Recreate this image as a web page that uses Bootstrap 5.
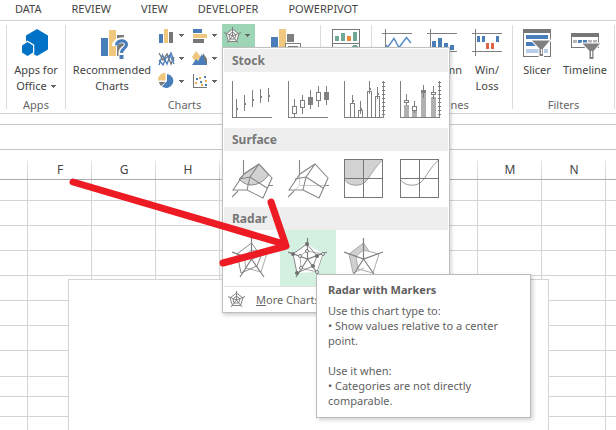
<!DOCTYPE html>
<html lang="en">
<head>
<meta charset="utf-8">
<meta name="viewport" content="width=device-width, initial-scale=1">
<title>Insert chart</title>
<link href="https://cdn.jsdelivr.net/npm/bootstrap@5.3.0/dist/css/bootstrap.min.css" rel="stylesheet">
<style>
  body { font-family: "Noto Sans", "Open Sans", sans-serif; font-size: 11px; line-height: 16px; color: #444; background: #fff; }
  button { font: inherit; color: inherit; background: none; border: 0; padding: 0; }
  svg { display: block; flex: none; }
  .px { shape-rendering: crispEdges; }
  .tabs { height: 21px; gap: 30px; padding-left: 15px; border-bottom: 1px solid #d4d4d4; }
  .tabs a { color: #444; text-decoration: none; line-height: 17px; }
  .ribbon { height: 93px; padding-left: 6px; border-bottom: 1px solid #d4d4d4; }
  .sep { width: 1px; margin: 4px 0; background: #dcdcdc; flex: none; }
  .group { flex: none; }
  .tools { height: 73px; padding-top: 3px; }
  .caption { color: #666; text-align: center; line-height: 16px; margin-top: 3px; }
  .g-apps { width: 58px; } .g-charts { width: 254px; } .g-reports { width: 50px; }
  .g-spark { width: 140px; } .g-filters { width: 101px; }
  .g-charts .caption { padding-right: 17px; }
  .big { padding-top: 5px; flex: none; }
  .big svg.pic { margin-bottom: 3px; }
  .big span { white-space: nowrap; }
  .w-rec { width: 84px; margin: 0 2px 0 4px; }
  .w-pivot { width: 60px; margin-left: 1px; }
  .w-spark { width: 45px; } .w-filter { width: 48px; }
  .small-grid { display: grid; grid-template-columns: repeat(3, 33px); grid-auto-rows: 23px; }
  .tool { width: 33px; height: 23px; padding-left: 2px; gap: 4px; }
  .tool.open { background: #9fd5b7; }
  .gallery.dropdown-menu { font-size: 11px; color: #666; width: 228px; min-width: 0; padding: 1px 1px 0; margin: 0; border: 1px solid #c0c0c0; border-radius: 0; box-shadow: 1px 2px 4px rgba(0,0,0,.2); line-height: 16px; }
  .gallery h2 { font-size: 12px; font-weight: 700; line-height: 23px; margin: 0; padding-left: 8px; background: #eee; color: #777; }
  .cells { height: 56px; }
  .cell { width: 56px; height: 56px; padding: 8px; position: relative; flex: none; }
  .cell.on { background: #d3f0e0; }
  .more { height: 26px; border-top: 1px solid #e1e1e1; width: 100%; padding-left: 4px; gap: 11px; color: #666; }
  .tip { position: absolute; left: 36px; top: 44px; width: 215px; padding: 7px 11px 9px; background: #fff; border: 1px solid #bbb; box-shadow: 2px 2px 4px rgba(0,0,0,.18); color: #5f5f5f; line-height: 15px; text-align: left; z-index: 5; }
  .tip strong { display: block; margin-bottom: 6px; }
  .strip { height: 11px; border-bottom: 1px solid #c6c6c6; }
  .formula { height: 25px; border: 0; border-bottom: 1px solid #c6c6c6; width: 100%; display: block; outline: 0; }
  .sheet { overflow: hidden; min-height: 0; }
  .sheet table { table-layout: fixed; width: 670px; border-collapse: separate; border-spacing: 0; }
  .sheet col { width: 64px; } .sheet .c-first { width: 28px; } .sheet .c-wide { width: 66px; }
  .sheet td { height: 25px; padding: 0; border-right: 1px solid #d4d4d4; border-bottom: 1px solid #d4d4d4; }
  .sheet th { height: 30px; padding: 10px 0 0; font-size: 12px; font-weight: 400; text-align: center; border-bottom: 1px solid #ababab; background: linear-gradient(#eee, #ccc) right bottom / 1px 20px no-repeat; }
  .sheet tr.r21 td { height: 21px; } .sheet tr.r26 td { height: 26px; } .sheet tr.r20 td { height: 20px; }
  .chart { position: absolute; left: 68px; top: 129px; width: 481px; height: 330px; background: #fff; border: 1px solid #d4d4d4; }
  .note { position: absolute; left: 0; top: 0; z-index: 2000; pointer-events: none; }
</style>
<script src="https://cdn.jsdelivr.net/npm/bootstrap@5.3.0/dist/js/bootstrap.bundle.min.js"></script>
</head>
<body class="vh-100 overflow-hidden d-flex flex-column position-relative">
<svg width="0" height="0" class="position-absolute" aria-hidden="true">
  <defs>
    <g id="caret"><path d="M0 0h5v1h-1v1h-1v1h-1v-1h-1v-1h-1z" fill="#666"/></g>
    <g id="mesh" fill="none" stroke="#888" stroke-width="1.1">
      <path d="M11.500 1v14M36 26.500h5M0 38l6-6"/>
      <path d="M1 31L12 15L27 5L40 19L31 39L15 31ZM7 20L18 18L27 5M18 18L35 29M18 18L15 31"/>
    </g>
    <g id="web" fill="none" stroke="#808080">
      <path d="M19.500 0v21M0 14l19.500 7L39 14M8 39l11.500-18L32 39" stroke-width="1.200"/>
    </g>
    <g id="webmini" fill="none" stroke="#777" stroke-width=".9">
      <path d="M8.500 0v9M0 5.500l8.500 3.500L17 5.500M3 16l5.500-7L14 16"/>
      <path d="M8.500 2L15 7L12.500 14.500H4.500L2 7ZM8.500 5L12 8L10.500 12H6L5 8Z"/>
    </g>
  </defs>
</svg>

<nav class="tabs d-flex flex-shrink-0" aria-label="Ribbon tabs">
  <a href="#">DATA</a><a href="#">REVIEW</a><a href="#">VIEW</a><a href="#">DEVELOPER</a><a href="#">POWERPIVOT</a>
</nav>

<div class="ribbon d-flex flex-shrink-0">
  <div class="sep"></div>
  <section class="group g-apps">
    <div class="tools d-flex justify-content-center">
      <button class="big d-flex flex-column align-items-center">
        <svg class="pic" width="28" height="30" fill="#0072c6"><path d="M15 0L26 6.500V20.500L15 27L4 20.500V6.500Z"/><path d="M5.500 13L11 16.500V23.500L5.500 27L0 23.500V16.500Z" stroke="#fff" stroke-width="2.500" paint-order="stroke"/></svg>
        <span>Apps for</span><span class="d-flex align-items-center">Office<svg width="5" height="3" class="ms-1"><use href="#caret"/></svg></span>
      </button>
    </div>
    <div class="caption">Apps</div>
  </section>
  <div class="sep"></div>
  <section class="group g-charts">
    <div class="tools d-flex align-items-start">
      <button class="big w-rec d-flex flex-column align-items-center">
        <svg class="pic" width="34" height="30"><path d="M6 9h7v18H6z" fill="#4a7ebb"/><path d="M14 1h7v26h-7z" fill="#f0c77f"/><path d="M22 6h7v21h-7z" fill="#7a7a7a"/><path d="M20 17C20 10 32 9.500 32 15.500C32 20 26.500 19 26.500 24V30" fill="none" stroke="#fff" stroke-width="6"/><path d="M21.500 16.500C22 10.500 31.500 10.500 31.500 15.500C31.500 19.500 26.500 19 26.500 24" fill="none" stroke="#4a7ebb" stroke-width="3.200"/><path d="M24.500 26h4v4h-4z" fill="#4a7ebb"/></svg>
        <span>Recommended</span><span>Charts</span>
      </button>
      <div class="small-grid">
        <button class="tool d-flex align-items-center" aria-label="Column chart"><svg class="px" width="17" height="17"><path d="M1 7h4v9H1z" fill="#4a7ebb"/><path d="M6 2h4v14H6z" fill="#f0c77f"/><path d="M11 5h4v11h-4z" fill="#777"/></svg><svg width="5" height="3"><use href="#caret"/></svg></button>
        <button class="tool d-flex align-items-center" aria-label="Bar chart"><svg class="px" width="17" height="17"><path d="M2 2h9v4H2z" fill="#4a7ebb"/><path d="M2 7h14v4H2z" fill="#f0c77f"/><path d="M2 12h11v4H2z" fill="#777"/></svg><svg width="5" height="3"><use href="#caret"/></svg></button>
        <div class="dropdown">
          <button class="tool open d-flex align-items-center" aria-label="Stock, surface or radar chart" aria-expanded="true"><svg width="17" height="17"><path d="M8.500 2L15 7L12.500 14.500H4.500L2 7Z" fill="#f4f4f4"/><use href="#webmini"/></svg><svg width="5" height="3"><use href="#caret"/></svg></button>
          <div class="dropdown-menu gallery show">
            <h2>Stock</h2>
            <div class="cells d-flex">
              <button class="cell" aria-label="High-Low-Close"><svg class="px" width="41" height="40" fill="none" stroke="#808080"><path d="M.5 1v36.500H40M4.500 19v18M12.500 15v16M20.500 10v17M28.500 9v14M36.500 8v14"/><path d="M5 28.500h1M13 23.500h1M21 19.500h1M29 16.500h1M37 15.500h1" stroke-width="2"/></svg></button>
              <button class="cell" aria-label="Open-High-Low-Close"><svg class="px" width="41" height="40" fill="#fff" stroke="#808080"><path d="M.5 1v36.500H40" fill="none"/><path d="M6.500 19v18M14.500 15v19M22.500 10v19M30.500 6v21M38.500 6v19"/><path d="M4.500 26.500h4v7h-4zM12.500 20.500h4v7h-4zM28.500 12.500h4v8h-4z"/><path d="M20.500 17.500h4v7h-4zM36.500 12.500h4v7h-4z" fill="#808080"/></svg></button>
              <button class="cell" aria-label="Volume-High-Low-Close"><svg class="px" width="41" height="40" fill="none" stroke="#808080"><path d="M.5 1v36.500H39.500V1M6.500 37V23.500h4V37M14.500 37V30.500h4V37M23.500 37V11.500h4V37M31.500 37V16.500h4V37"/><path d="M8.500 15v8M16.500 21v13M25.500 1v13M33.500 7v12"/><path d="M9 20.500h1M17 28.500h1M26 8.500h1M34 13.500h1" stroke-width="2"/><path d="M38 2.500h3M38 6.500h3M38 10.500h3M38 14.500h3M38 18.500h3M38 22.500h3M38 26.500h3M38 30.500h3M38 34.500h3"/></svg></button>
              <button class="cell" aria-label="Volume-Open-High-Low-Close"><svg class="px" width="41" height="40" fill="none" stroke="#808080"><path d="M4 25h5v12H4zM12 31h5v6h-5zM21 12h5v25h-5zM31 17h5v20h-5z" fill="#b0b0b0" stroke="none"/><path d="M.5 1v36.500H39.500V1M6.500 14v11M14.500 21v12M23.500 5v13M33.500 6v13"/><path d="M4.500 20.500h4v2h-4zM12.500 26.500h4v4h-4zM31.500 12.500h4v2h-4z" fill="#fff"/><path d="M21.500 10.500h4v2h-4z" fill="#808080"/><path d="M38 2.500h3M38 6.500h3M38 10.500h3M38 14.500h3M38 18.500h3M38 22.500h3M38 26.500h3M38 30.500h3M38 34.500h3"/></svg></button>
            </div>
            <h2>Surface</h2>
            <div class="cells d-flex">
              <button class="cell" aria-label="3-D Surface"><svg width="41" height="40"><path d="M7 20L12 15L27 5L36.500 16C30 25 17 31 7 20Z" fill="#d2d2d2" stroke="#888"/><use href="#mesh"/></svg></button>
              <button class="cell" aria-label="Wireframe 3-D Surface"><svg width="41" height="40"><path d="M6 32L11.500 26.500V15M11.500 26.500H36" fill="none" stroke="#ccc"/><use href="#mesh"/></svg></button>
              <button class="cell" aria-label="Contour"><svg width="40" height="40"><path d="M.5.5h38C30 8 27 16 23 21C19 27 6 29 .5 20.500Z" fill="#d2d2d2"/><path d="M38.500 1C31 8 27 16 23 21C19 27 6 29 .5 20.500" fill="none" stroke="#999"/><path class="px" d="M.5.5h38v38H.5zM19.500 0v38M0 19.500h38" fill="none" stroke="#777"/></svg></button>
              <button class="cell" aria-label="Wireframe Contour"><svg width="40" height="40"><path d="M38.500 1C31 8 27 16 23 21C19 27 6 29 .5 20.500" fill="none" stroke="#999"/><path class="px" d="M.5.5h38v38H.5zM19.500 0v38M0 19.500h38" fill="none" stroke="#777"/></svg></button>
            </div>
            <h2>Radar</h2>
            <div class="cells d-flex">
              <button class="cell" aria-label="Radar"><svg width="40" height="40" fill="none"><path d="M19.500 12L35 15L29 34L14 30L12 18Z" stroke="#aaa"/><path d="M19.500 5L29 18L25 28L9 35L5 16Z" stroke="#888"/><use href="#web"/></svg></button>
              <div class="cell on"><button aria-label="Radar with Markers" aria-describedby="radar-tip"><svg width="40" height="40"><path d="M19.500 6L35 16L29 34L9 35L5 16Z" fill="#fff"/><path d="M19 13L35 16L29 34L13 30L12 18Z" fill="none" stroke="#aaa"/><path d="M19 6L29 18L25 28L9 35L5 16Z" fill="none" stroke="#888"/><use href="#web"/><g fill="#707070"><circle cx="19" cy="6" r="2"/><circle cx="5" cy="16" r="2"/><circle cx="29" cy="18" r="2"/><circle cx="25" cy="28" r="2"/><circle cx="9" cy="35" r="2"/></g><g fill="#fff" stroke="#777"><circle cx="19" cy="13" r="1.500"/><circle cx="35" cy="16" r="1.500"/><circle cx="12" cy="18" r="1.500"/><circle cx="13" cy="30" r="1.500"/><circle cx="29" cy="34" r="1.500"/></g></svg></button>
                <div class="tip" id="radar-tip" role="tooltip"><strong>Radar with Markers</strong>Use this chart type to:<br>• Show values relative to a center<br>point.<br><br>Use it when:<br>• Categories are not directly<br>comparable.</div>
              </div>
              <button class="cell" aria-label="Filled Radar"><svg width="40" height="40"><path d="M19.500 5L25 13L19.500 12L12 18L14 30L9 35L5 16Z" fill="#d0d0d0"/><path d="M19.500 12L35 16L29 35L14 31L12 18Z" fill="#fff" stroke="#aaa"/><path d="M25 13L19.500 5L5 16L9 35L20 30" fill="none" stroke="#aaa"/><use href="#web"/></svg></button>
            </div>
            <button class="more d-flex align-items-center"><svg width="17" height="17"><use href="#webmini"/></svg><span><u>M</u>ore Charts...</span></button>
          </div>
        </div>
        <button class="tool d-flex align-items-center" aria-label="Line chart"><svg width="17" height="17" fill="none" stroke-width="1.300"><path d="M1 15L4.500 5L9 14L13 3L16 11" stroke="#4a7ebb"/><path d="M1 3L5 10L9 4L13 14L16 7" stroke="#777"/><path d="M1 10L5 15L8 8L12 5L16 14" stroke="#4a7ebb"/></svg><svg width="5" height="3"><use href="#caret"/></svg></button>
        <button class="tool d-flex align-items-center" aria-label="Area chart"><svg width="17" height="17"><path d="M1 7L5 1L10 7L5 12Z" fill="#f0c77f"/><path d="M12 3L16 9V15H12Z" fill="#777"/><path d="M1 15L5 9L7 11L11 4L16 15Z" fill="#4a7ebb"/></svg><svg width="5" height="3"><use href="#caret"/></svg></button>
        <span></span>
        <button class="tool d-flex align-items-center" aria-label="Pie chart"><svg width="17" height="17"><path d="M9 8V1A7 7 0 1 1 4 13.500Z" fill="#4a7ebb"/><path d="M7.500 7.500V0A7 7 0 0 0 0 7.500Z" fill="#f0c77f"/><path d="M7.500 9H1A7 7 0 0 0 3 13Z" fill="#777"/></svg><svg width="5" height="3"><use href="#caret"/></svg></button>
        <button class="tool d-flex align-items-center" aria-label="Scatter chart"><svg class="px" width="17" height="17"><path d="M2.500 1v13.500H16" fill="none" stroke="#777"/><path d="M4 9h2v2H4zM8 4h2v2H8zM10 11h2v2h-2zM14 7h2v2h-2z" fill="#eda94b"/><path d="M5 5h2v2H5zM9 8h2v2H9zM13 3h2v2h-2zM14 11h2v2h-2z" fill="#4a7ebb"/></svg><svg width="5" height="3"><use href="#caret"/></svg></button>
      </div>
      <button class="big w-pivot d-flex flex-column align-items-center" aria-label="PivotChart"><svg class="pic px" width="30" height="30"><path d="M0 8h7v19H0z" fill="#4a7ebb"/><path d="M8 0h7v27H8z" fill="#f0c77f"/><path d="M16 5h7v8h-7z" fill="#808080"/><path d="M14.500 14.500h15v14h-15zM17 17.500h10" fill="#fff" stroke="#808080"/></svg></button>
    </div>
    <div class="caption">Charts</div>
  </section>
  <div class="sep"></div>
  <section class="group g-reports">
    <div class="tools d-flex justify-content-center">
      <button class="big d-flex flex-column align-items-center" aria-label="Power View"><svg class="pic px" width="28" height="30"><path d="M.5.5h27v28H.5zM0 14.500h28" fill="#fff" stroke="#777"/><path d="M3 7h4v5H3zM9 4h4v8H9zM21 3h4v9h-4z" fill="#6fa897"/><path d="M15 7h4v5h-4zM7 18h5v3H7z" fill="#ed8b3b"/><circle cx="23" cy="20" r="4" fill="#6fa897"/></svg></button>
    </div>
  </section>
  <div class="sep"></div>
  <section class="group g-spark">
    <div class="tools d-flex justify-content-center">
      <button class="big w-spark d-flex flex-column align-items-center"><svg class="pic" width="30" height="30" fill="none"><path class="px" d="M0 4.500h30M3.500 0v27M0 22.500h30" stroke="#808080"/><path d="M4 16L5.500 18.500L12 9.500L17 18.500L24.500 8.500L29 14" stroke="#5b8fc9" stroke-width="1.500"/></svg><span>Line</span></button>
      <button class="big w-spark d-flex flex-column align-items-center"><svg class="pic px" width="30" height="30"><path d="M0 4.500h30M3.500 0v27M0 22.500h30" stroke="#808080"/><path d="M5 12h4v9H5zM11 9h4v12h-4zM17 14h4v7h-4zM23 16h4v5h-4z" fill="#4a7ebb"/></svg><span>Column</span></button>
      <button class="big w-spark d-flex flex-column align-items-center"><svg class="pic px" width="30" height="30"><path d="M0 4.500h30M3.500 0v27M0 22.500h30" stroke="#808080"/><path d="M5 7h3v6H5zM10 7h3v6h-3zM24 7h3v6h-3z" fill="#4a7ebb"/><path d="M14 14h3v6h-3zM19 14h3v6h-3z" fill="#dd6545"/></svg><span>Win/</span><span>Loss</span></button>
    </div>
    <div class="caption">Sparklines</div>
  </section>
  <div class="sep"></div>
  <section class="group g-filters">
    <div class="tools d-flex">
      <button class="big w-filter d-flex flex-column align-items-center"><svg class="pic" width="28" height="30"><path class="px" d="M.5.5h27v27H.5z" fill="#fff" stroke="#777"/><path class="px" d="M0 0h28v4H0z" fill="#777"/><path d="M3 6h22v4H3zM3 13h10v4H3z" fill="#4a7ebb"/><path d="M3 20h22v4H3z" fill="#b8cde8"/><path d="M9 11.500H27L20 19.500V27H16.500V19.500Z" fill="#808080" stroke="#fff" paint-order="stroke" stroke-width="2"/><path d="M18 20h1.200v5H18z" fill="#fff"/></svg><span>Slicer</span></button>
      <button class="big w-filter d-flex flex-column align-items-center"><svg class="pic" width="30" height="30"><path class="px" d="M1.500 4.500h27v14h-27z" fill="#fff" stroke="#777"/><path class="px" d="M1 4h28v4H1z" fill="#777"/><path class="px" d="M3 11h4v3H3zM18 11h4v3h-4zM23 11h4v3h-4z" fill="#b5b5b5"/><path class="px" d="M8 11h4v3H8zM13 11h4v3h-4z" fill="#4a7ebb"/><path d="M12.500 14.500H30L23.500 22V30H19.500V22Z" fill="#808080" stroke="#fff" paint-order="stroke" stroke-width="2"/><path d="M21 22h1.200v6H21z" fill="#fff"/></svg><span>Timeline</span></button>
    </div>
    <div class="caption">Filters</div>
  </section>
  <div class="sep"></div>
</div>

<div class="strip flex-shrink-0"></div>
<input class="formula flex-shrink-0" type="text" aria-label="Formula bar">

<main class="sheet flex-grow-1 position-relative">
  <table aria-label="Worksheet">
    <colgroup><col class="c-first"><col span="6"><col class="c-wide"><col span="3"></colgroup>
    <thead><tr><th></th><th>F</th><th>G</th><th>H</th><th>I</th><th>J</th><th>K</th><th>L</th><th>M</th><th>N</th><th></th></tr></thead>
    <tbody id="rows"></tbody>
  </table>
  <div class="chart" role="img" aria-label="Empty chart area"></div>
</main>

<svg class="note" width="300" height="280" aria-hidden="true"><path d="M73 182L284 244M271 202L286 246L223 263" fill="none" stroke="#ed1c24" stroke-width="7" stroke-linecap="round" stroke-linejoin="round"/></svg>

<script>
  const heights = ["r21", "", "", "", "", "", "", "r26", "r20", "r20", "r20", "r20"];
  document.getElementById("rows").innerHTML = heights
    .map(h => `<tr class="${h}">${"<td></td>".repeat(11)}</tr>`).join("");
</script>
</body>
</html>
